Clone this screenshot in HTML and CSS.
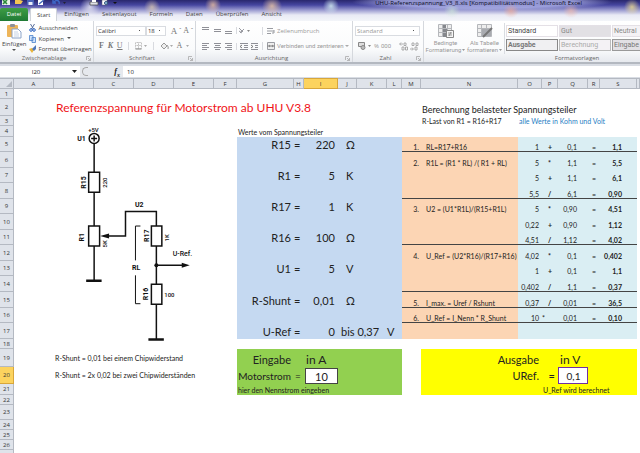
FILE: index.html
```html
<!DOCTYPE html>
<html lang="de">
<head>
<meta charset="utf-8">
<title>UHU-Referenzspannung_V3_8.xls</title>
<link rel="stylesheet" href="styles.css">
</head>
<body>
<header class="titlebar">
  <svg class="quick" width="122" height="7" viewBox="0 0 122 7" aria-hidden="true">
    <rect x="2" y="0" width="8" height="5" fill="#e8f3e6"/><path d="M3 0l4 4M7 0L3 4" stroke="#2c8a3a" stroke-width="1.6"/>
    <path d="M15 0h5l3 1-2 3h-6z" fill="#f3c552"/><path d="M27 0h7v5h-7z" fill="#4a63b8"/><path d="M28.500 2h4v3h-4z" fill="#e9edf8"/>
    <path d="M38 0h5v5h-5z" fill="#fff"/><path d="M39 4l5-4" stroke="#4468b8" stroke-width="1.500"/>
    <path d="M54 2c3-3 6-1 5 2M53 0v3h3" fill="none" stroke="#3e68c8" stroke-width="1.400"/>
    <path d="M63 2h3l-1.500 2z" fill="#223"/>
    <path d="M90 2h8v3h-8z" fill="#e0e2e8" stroke="#444" stroke-width=".7"/><path d="M92 0h4v2h-4z" fill="#fff"/>
    <path d="M102 0h5v5h-5z" fill="#fff" stroke="#667" stroke-width=".5"/><circle cx="106" cy="3" r="1.500" fill="#9ac3e8" stroke="#357"/>
    <path d="M113 2h4l-2 2z" fill="#111"/>
  </svg>
  <h1 class="title">UHU-Referenzspannung_V3_8.xls [Kompatibilitätsmodus] - Microsoft Excel</h1>
</header>
<nav class="tabs">
  <button class="tab file">Datei</button>
  <button class="tab active">Start</button>
  <button class="tab">Einfügen</button>
  <button class="tab">Seitenlayout</button>
  <button class="tab">Formeln</button>
  <button class="tab">Daten</button>
  <button class="tab">Überprüfen</button>
  <button class="tab">Ansicht</button>
</nav>
<section class="ribbon">
  <div class="group clipboard">
    <div class="tools">
      <button class="paste">
        <svg width="16" height="16" viewBox="0 0 16 16"><rect x="1" y="2" width="11" height="12" rx="1" fill="#edb459"/><rect x="4" y="1" width="5" height="3" rx="1" fill="#8d8f99"/><path d="M6 6h6l3 3v6H6z" fill="#fff" stroke="#8ba3c8"/><path d="M8 9h4M8 11h5M8 13h5" stroke="#b8c8e0" stroke-width=".8"/></svg>
        <span>Einfügen</span>
        <svg width="4" height="3" viewBox="0 0 4 3"><path d="M0 0h4L2 2z" fill="#555"/></svg>
      </button>
      <div class="stack">
        <button><svg width="7" height="8" viewBox="0 0 7 8"><path d="M1.500 0l3 5M5.500 0l-3 5" stroke="#5a6f9c"/><circle cx="2" cy="6" r="1.300" fill="none" stroke="#2c62c0"/><circle cx="5" cy="6" r="1.300" fill="none" stroke="#2c62c0"/></svg>Ausschneiden</button>
        <button><svg width="7" height="8" viewBox="0 0 7 8"><path d="M.5.500h3.500v5h-3.500zM3 2.500h3.500v5H3z" fill="#cfe2fa" stroke="#4c83cc" stroke-width=".8"/></svg>Kopieren<svg width="4" height="3" viewBox="0 0 4 3"><path d="M0 0h4L2 2z" fill="#555"/></svg></button>
        <button><svg width="7" height="8" viewBox="0 0 7 8"><path d="M0 4l3-1 2 2-2 3z" fill="#e9b43c"/><path d="M3 4l4-4v4l-2 2z" fill="#4d76b8"/></svg>Format übertragen</button>
      </div>
    </div>
    <p class="name"><span>Zwischenablage</span><svg width="5" height="5" viewBox="0 0 5 5"><path d="M.5 4V.500H4M2 2l2.500 2.500M4.500 2v2.500H2" fill="none" stroke="#aaa" stroke-width=".8"/></svg></p>
  </div>
  <div class="group font">
    <div class="tools col">
      <div class="line">
        <select class="face" aria-label="Schriftart"><option>Calibri</option></select><select class="size" aria-label="Schriftgrad"><option>18</option></select>
        <button class="serif big">A<sup>ˆ</sup></button><button class="serif">A<sup>ˇ</sup></button>
      </div>
      <div class="line serif gray spread">
        <button><b>F</b></button><button><b><i>K</i></b></button><button><u>U</u></button><i class="bar"></i>
        <svg width="12" height="8" viewBox="0 0 12 8"><path d="M.5.500h6v6h-6zM3.500.500v6M.5 3.500h6" fill="none" stroke="#bbb" stroke-dasharray="1 .6"/><path d="M.5 7h6" stroke="#888"/><path d="M9 3h3l-1.500 2z" fill="#aaa"/></svg><i class="bar"></i>
        <svg width="13" height="8" viewBox="0 0 13 8"><path d="M1 4l3-3 3 3-3 3z" fill="#eee" stroke="#999"/><path d="M7 3q2 2 1 4" stroke="#999" fill="none"/><path d="M10 3h3l-1.500 2z" fill="#aaa"/></svg>
        <button>A</button><svg width="4" height="3" viewBox="0 0 4 3"><path d="M0 0h3L1.500 2z" fill="#aaa"/></svg>
      </div>
    </div>
    <p class="name"><span>Schriftart</span><svg width="5" height="5" viewBox="0 0 5 5"><path d="M.5 4V.500H4M2 2l2.500 2.500M4.500 2v2.500H2" fill="none" stroke="#aaa" stroke-width=".8"/></svg></p>
  </div>
  <div class="group align">
    <div class="tools col">
      <div class="line">
        <svg width="46" height="9" viewBox="0 0 46 9" fill="none" stroke="#8f9097"><path d="M4 1.500h7M4 3.500h7"/><path d="M16 3.500h7M16 5.500h7"/><path d="M27 5.500h7M27 7.500h7"/><path d="M38.500 1v7" stroke="#d8dadf"/><path d="M42 7l4-4M41 2l4 4M41 5l3 2" stroke-width=".9"/></svg>
        <svg width="12" height="5" viewBox="0 0 12 5"><path d="M1 2h3l-1.500 2z" fill="#888"/></svg><i class="bar"></i>
        <button><svg width="8" height="8" viewBox="0 0 8 8" fill="none" stroke="#9a9ca2"><path d="M0 1.500h6M0 4h7M0 6.500h4"/><path d="M5 6h2V3"/></svg>Zeilenumbruch</button>
      </div>
      <div class="line">
        <svg width="60" height="9" viewBox="0 0 60 9" fill="none" stroke="#8f9097"><path d="M4 1.500h7M4 3.500h5M4 5.500h7M4 7.500h5M16 1.500h7M17 3.500h5M16 5.500h7M17 7.500h5M27 1.500h7M29 3.500h5M27 5.500h7M29 7.500h5"/><path d="M38.500 1v7" stroke="#d8dadf"/><path d="M42 1.500h8M46 3.500h4M46 5.500h4M42 7.500h8M53 1.500h7M57 3.500h3M57 5.500h3M53 7.500h7"/><path d="M44 3l-2 1.500L44 6M53 3l2 1.500L53 6" stroke="#777"/></svg><i class="bar"></i>
        <button class="tight"><svg width="8" height="8" viewBox="0 0 8 8"><path d="M.5.500h7v7h-7z" fill="#eee" stroke="#9a9ca2"/><path d="M0 4h8M3 3L1.500 4 3 5zM5 3l1.500 1L5 5z" fill="#777" stroke="#888" stroke-width=".7"/></svg>Verbinden und zentrieren<svg width="4" height="3" viewBox="0 0 4 3"><path d="M0 0h4L2 2z" fill="#aaa"/></svg></button>
      </div>
    </div>
    <p class="name"><span>Ausrichtung</span><svg width="5" height="5" viewBox="0 0 5 5"><path d="M.5 4V.500H4M2 2l2.500 2.500M4.500 2v2.500H2" fill="none" stroke="#aaa" stroke-width=".8"/></svg></p>
  </div>
  <div class="group number">
    <div class="tools col">
      <div class="line"><select class="format" aria-label="Zahlenformat"><option>Standard</option></select></div>
      <div class="line spread gray">
        <svg width="14" height="8" viewBox="0 0 14 8"><path d="M.5.500h6v4h-6z" fill="#ddd" stroke="#888"/><circle cx="5" cy="5.500" r="2" fill="#bbb" stroke="#888"/><path d="M10 3h3l-1.500 2z" fill="#888"/></svg>
        <button>%</button><button class="tight">000</button><i class="bar"></i>
        <svg width="20" height="9" viewBox="0 0 20 9" fill="none" stroke="#999" stroke-width=".8"><path d="M1 2h3M2 .5L.5 2 2 3.500M5 1h2v2.500h-2zM3 5h2v3h-2zM6.500 5h2v3h-2z"/><path d="M11 7h3M13 5.500L14.500 7 13 8.500M13 1h2v2.500h-2zM17 1h2v2.500h-2zM16 5h2v3h-2z"/></svg>
      </div>
    </div>
    <p class="name"><span>Zahl</span><svg width="5" height="5" viewBox="0 0 5 5"><path d="M.5 4V.500H4M2 2l2.500 2.500M4.500 2v2.500H2" fill="none" stroke="#aaa" stroke-width=".8"/></svg></p>
  </div>
  <div class="group styles">
    <div class="tools">
      <button class="large"><svg width="16" height="14" viewBox="0 0 16 14"><path d="M.5.500h13v12h-13zM0 4.500h13M0 8.500h13M4.500 0v12M9.500 0v12" fill="#eee" stroke="#b5b7bb"/><path d="M5 1h3v3H5zM5 5h4v3H5zM5 9h3v4H5z" fill="#85878c"/><path d="M8.500 6.500h7v7h-7z" fill="#f5f5f5" stroke="#888"/><path d="M10 9h4M10 11h4M13 8l-2 4" stroke="#777" stroke-width=".7"/></svg><span>Bedingte</span><span class="drop">Formatierung<svg width="3" height="2" viewBox="0 0 3 2"><path d="M0 0h3L1.500 2z" fill="#999"/></svg></span></button>
      <button class="large"><svg width="16" height="14" viewBox="0 0 16 14"><path d="M.5.500h14v12h-14zM0 4.500h14M0 8.500h14M4.500 0v12M9.500 0v12" fill="#eee" stroke="#b5b7bb"/><path d="M5 5h9v7H5z" fill="#a9abb0"/><path d="M6 13l3-3 6-6" stroke="#777" stroke-width="2"/></svg><span>Als Tabelle</span><span class="drop">formatieren<svg width="3" height="2" viewBox="0 0 3 2"><path d="M0 0h3L1.500 2z" fill="#999"/></svg></span></button>
      <div class="gallery">
        <button class="plain">Standard</button><button class="shade">Gut</button><button class="faint">Neutral</button>
        <button class="framed">Ausgabe</button><button class="pale">Berechnung</button><button class="shade lined">Eingabe</button>
      </div>
    </div>
    <p class="name"><span>Formatvorlagen</span></p>
  </div>
</section>
<section class="formula">
  <div class="namebox"><input aria-label="Namenfeld" value="I20"><svg width="5" height="4" viewBox="0 0 5 4"><path d="M0 0h5L2.500 3z" fill="#222"/></svg></div>
  <div class="fx"><span class="knob"></span><button>f<sub>x</sub></button></div>
  <input class="entry" aria-label="Bearbeitungsleiste" value="10">
</section>
<table class="sheet">
  <colgroup><col class="w14"><col class="w40"><col class="w40"><col class="w40"><col class="w40"><col class="w40"><col class="w23"><col class="w57"><col class="w10"><col class="w34"><col class="w19"><col class="w30"><col class="w15"><col class="w19"><col class="w97"><col class="w24"><col class="w16"><col class="w30"><col class="w12"><col class="w37"><col></colgroup>
  <thead>
    <tr><th class="corner"><svg width="6" height="6" viewBox="0 0 6 6"><path d="M6 0v6H0z" fill="#b4b9c2"/></svg></th><th>A</th><th>B</th><th>C</th><th>D</th><th>E</th><th>F</th><th>G</th><th>H</th><th class="sel">I</th><th>J</th><th>K</th><th>L</th><th>M</th><th>N</th><th>O</th><th>P</th><th>Q</th><th>R</th><th>S</th><th></th></tr>
  </thead>
  <tbody>
    <tr class="h10"><th>1</th><td colspan="20"></td></tr>
    <tr class="h17"><th>2</th><td></td><td colspan="12" class="heading">Referenzspannung für Motorstrom ab UHU V3.8</td><td colspan="7" class="subheading">Berechnung belasteter Spannungsteiler</td></tr>
    <tr class="h10"><th>3</th>
      <td colspan="6" rowspan="16" class="drawing">
        <svg class="circuit" viewBox="14 115 223 233" role="img" aria-label="Schaltplan Spannungsteiler">
          <g fill="none" stroke="#111" stroke-width="1.500">
            <circle cx="94" cy="137.500" r="5"/><path d="M91 137.500h6M94 134.500v6M94 143v28.500M94 191.500v34M94 245.500v35"/>
            <path d="M88.500 171.500h11v20h-11zM88.500 225.500h11v20h-11zM151.500 225.500h10.500v20h-10.500zM151.500 284h10.500v20h-10.500z"/>
            <path d="M105 235.500h20.500V211H156.500v14.500M156.500 245.500V284M156.500 304v35M156.500 264.800H184"/>
            <path d="M140.500 225.500h-5V260M135.500 275v28.500h5" stroke-width="1"/>
            <path d="M86 280.500h15.500M148.500 339.500H164" stroke-width="2.600"/>
          </g>
          <path d="M100 235.500l9-2.500v5zM190 264.800l-8-2.500v5z" fill="#111"/><circle cx="156.500" cy="264.800" r="2" fill="#111"/>
          <g class="part">
            <text x="77" y="140.500">U1</text><text x="135" y="206">U2</text><text x="132" y="270">RL</text><text class="net" x="173" y="255.500">U-Ref.</text>
            <text transform="translate(86 188)rotate(-90)">R15</text><text transform="translate(84 241)rotate(-90)">R1</text>
            <text transform="translate(149 241.500)rotate(-90)">R17</text><text transform="translate(148 300)rotate(-90)">R16</text>
          </g>
          <g class="value">
            <text x="88" y="131">+5V</text><text x="164.500" y="296.500">100</text>
            <text transform="translate(107 187)rotate(-90)">220</text><text transform="translate(107 247)rotate(-90)">5K</text><text transform="translate(169 241)rotate(-90)">1K</text>
          </g>
        </svg>
      </td>
      <td colspan="7"></td><td class="small start">R-Last von R1 = R16+R17</td><td colspan="6" class="small blue start">alle Werte in Kohm und Volt</td></tr>
    <tr class="h11"><th>4</th><td colspan="14" class="small start">Werte vom Spannungsteiler</td></tr>
    <tr class="h15 rule"><th>5</th><td class="v r">R15</td><td class="v">=</td><td class="v r">220</td><td class="v u">Ω</td><td class="v"></td><td class="v"></td><td class="m">1.</td><td class="n">RL=R17+R16</td><td class="c r">1</td><td class="c op">+</td><td class="c q">0,1</td><td class="c eq">=</td><td class="c s">1,1</td><td></td></tr>
    <tr class="h16"><th>6</th><td class="v" colspan="6"></td><td class="m">2.</td><td class="n">R1L = (R1 * RL) /( R1 + RL)</td><td class="c r">5</td><td class="c op">*</td><td class="c q">1,1</td><td class="c eq">=</td><td class="c s">5,5</td><td></td></tr>
    <tr class="h15"><th>7</th><td class="v r">R1</td><td class="v">=</td><td class="v r">5</td><td class="v u">K</td><td class="v"></td><td class="v"></td><td class="m"></td><td class="n"></td><td class="c r">5</td><td class="c op">+</td><td class="c q">1,1</td><td class="c eq">=</td><td class="c s">6,1</td><td></td></tr>
    <tr class="h16 rule"><th>8</th><td class="v" colspan="6"></td><td class="m"></td><td class="n"></td><td class="c r">5,5</td><td class="c op">/</td><td class="c q">6,1</td><td class="c eq">=</td><td class="c s">0,90</td><td></td></tr>
    <tr class="h15"><th>9</th><td class="v r">R17</td><td class="v">=</td><td class="v r">1</td><td class="v u">K</td><td class="v"></td><td class="v"></td><td class="m">3.</td><td class="n">U2 = (U1*R1L)/(R15+R1L)</td><td class="c r">5</td><td class="c op">*</td><td class="c q">0,90</td><td class="c eq">=</td><td class="c s">4,51</td><td></td></tr>
    <tr class="h16"><th>10</th><td class="v" colspan="6"></td><td class="m"></td><td class="n"></td><td class="c r">0,22</td><td class="c op">+</td><td class="c q">0,90</td><td class="c eq">=</td><td class="c s">1,12</td><td></td></tr>
    <tr class="h15 rule"><th>11</th><td class="v r">R16</td><td class="v">=</td><td class="v r">100</td><td class="v u">Ω</td><td class="v"></td><td class="v"></td><td class="m"></td><td class="n"></td><td class="c r">4,51</td><td class="c op">/</td><td class="c q">1,12</td><td class="c eq">=</td><td class="c s">4,02</td><td></td></tr>
    <tr class="h16"><th>12</th><td class="v" colspan="6"></td><td class="m">4.</td><td class="n">U_Ref = (U2*R16)/(R17+R16)</td><td class="c r">4,02</td><td class="c op">*</td><td class="c q">0,1</td><td class="c eq">=</td><td class="c s">0,402</td><td></td></tr>
    <tr class="h15"><th>13</th><td class="v r">U1</td><td class="v">=</td><td class="v r">5</td><td class="v u">V</td><td class="v"></td><td class="v"></td><td class="m"></td><td class="n"></td><td class="c r">1</td><td class="c op">+</td><td class="c q">0,1</td><td class="c eq">=</td><td class="c s">1,1</td><td></td></tr>
    <tr class="h16 rule"><th>14</th><td class="v" colspan="6"></td><td class="m"></td><td class="n"></td><td class="c r">0,402</td><td class="c op">/</td><td class="c q">1,1</td><td class="c eq">=</td><td class="c s">0,37</td><td></td></tr>
    <tr class="h16 rule"><th>15</th><td class="v r">R-Shunt</td><td class="v">=</td><td class="v r">0,01</td><td class="v u">Ω</td><td class="v"></td><td class="v"></td><td class="m">5.</td><td class="n">I_max. = Uref / Rshunt</td><td class="c r">0,37</td><td class="c op">/</td><td class="c q">0,01</td><td class="c eq">=</td><td class="c s">36,5</td><td></td></tr>
    <tr class="h15 rule"><th>16</th><td class="v" colspan="6"></td><td class="m">6.</td><td class="n">U_Ref = I_Nenn * R_Shunt</td><td class="c r">10</td><td class="c">*</td><td class="c q">0,01</td><td class="c eq">=</td><td class="c s">0,10</td><td></td></tr>
    <tr class="h16"><th>17</th><td class="v r">U-Ref</td><td class="v">=</td><td class="v r">0</td><td class="v unitspan" colspan="2">bis 0,37</td><td class="v">V</td><td class="m"></td><td class="n"></td><td class="c" colspan="5"></td><td></td></tr>
    <tr class="h10"><th>18</th><td colspan="14"></td></tr>
    <tr class="h18"><th>19</th><td></td><td colspan="5" class="small note">R-Shunt = 0,01 bei einem Chipwiderstand</td><td class="g r">Eingabe</td><td class="g"></td><td class="g unit" colspan="4">in A</td><td></td><td class="y r" colspan="2">Ausgabe</td><td class="y"></td><td class="y unit" colspan="3">in V</td><td></td></tr>
    <tr class="h17"><th class="sel">20</th><td></td><td colspan="5" class="small note">R-Shunt = 2x 0,02 bei zwei Chipwiderständen</td><td class="g r mid"><label for="strom">Motorstrom</label></td><td class="g mid">=</td><td class="g"><input id="strom" class="amp" value="10"></td><td class="g" colspan="3"></td><td></td><td class="y r mid result" colspan="2">URef.</td><td class="y mid r result">=</td><td class="y out">0,1</td><td class="y" colspan="2"></td><td></td></tr>
    <tr class="h11"><th>21</th><td colspan="6"></td><td class="g small" colspan="6">hier den Nennstrom eingeben</td><td></td><td class="y" colspan="2"></td><td class="y small" colspan="4">U_Ref wird berechnet</td><td></td></tr>
    <tr class="h10"><th>22</th><td colspan="20"></td></tr>
    <tr class="h15"><th>23</th><td colspan="20"></td></tr>
    <tr class="h10"><th>24</th><td colspan="20"></td></tr>
    <tr class="h10"><th>25</th><td colspan="20"></td></tr>
    <tr class="h10"><th>26</th><td colspan="20"></td></tr>
    <tr class="h10"><th></th><td colspan="20"></td></tr>
  </tbody>
</table>
</body>
</html>
```
FILE: styles.css
```css
* { box-sizing: border-box; }
html, body { margin: 0; height: 100%; overflow: hidden; }
body {
  font: 6px/8px "Open Sans", "Noto Sans", sans-serif;
  color: #444;
  background:
    radial-gradient(ellipse 10px 10px at 90px 7px, #ffffffb0, #fff0),
    radial-gradient(ellipse 8px 8px at 152px 7px, #f6e0b0a0, #fff0),
    radial-gradient(ellipse 8px 8px at 213px 5px, #f6c8a0c0, #fff0),
    radial-gradient(ellipse 10px 9px at 272px 6px, #f7d0a4c0, #fff0),
    radial-gradient(ellipse 8px 8px at 331px 6px, #d9f3f3d0, #fff0),
    radial-gradient(ellipse 8px 7px at 452px 11px, #d0ead8a0, #fff0),
    radial-gradient(ellipse 8px 7px at 511px 11px, #f3a890a0, #fff0),
    radial-gradient(ellipse 8px 7px at 571px 11px, #f3b8a8a0, #fff0),
    radial-gradient(ellipse 8px 8px at 632px 7px, #f5e28cc0, #fff0),
    radial-gradient(ellipse 130px 9px at 482px 2px, #a8ace4d0 70%, #fff0),
    linear-gradient(#29276d, #4646a0 5px, #9a9ad0 10px, #e9eaf5 15px, #f3f5f9 21px, #fff 22px);
}
button, input, select { font: inherit; color: inherit; border: 0; padding: 0; margin: 0; background: none; border-radius: 0; }
button { white-space: nowrap; text-align: inherit; }
svg { flex: none; display: block; }
p, h1 { margin: 0; }

.titlebar { display: flex; justify-content: space-between; height: 8px; }
.title { margin-right: 58px; font-size: 6px; font-weight: 400; line-height: 6px; color: #0a0a22; white-space: nowrap; }

.tabs { display: flex; gap: 1px; height: 13px; }
.tab { padding: 0 6px; line-height: 13px; color: #444; }
.tab.file { width: 28px; margin-right: 1px; padding: 0; text-align: center; color: #fff; background: linear-gradient(#3f9d45, #1f7a35); border-radius: 2px 2px 0 0; }
.tab.active { background: #fff; border: 1px solid #cfd3da; border-bottom: 0; border-radius: 2px 2px 0 0; line-height: 12px; }

.ribbon { display: flex; height: 43px; overflow: hidden; background: linear-gradient(#fff, #fafbfc 28px, #e6e9ee); border-bottom: 2px solid #b3b8c0; }
.group { display: flex; flex-direction: column; flex: none; border-right: 1px solid #d5d8dd; padding: 2px 2px 0; }
.clipboard { width: 94px; }
.font { width: 102px; }
.align { width: 157px; }
.number { width: 71px; }
.styles { flex: 1 0 306px; border: 0; }
.tools { display: flex; height: 32px; }
.col { flex-direction: column; justify-content: space-around; }
.name { display: flex; align-items: center; text-align: center; color: #666; line-height: 8px; }
.name span { flex: 1; }
.line { display: flex; align-items: center; gap: 2px; height: 12px; color: #999; }
.line button, .stack button { display: flex; align-items: center; gap: 2px; }
.spread { justify-content: space-between; padding: 0 3px; }
.serif { font-family: "Liberation Serif", serif; font-size: 8px; color: #777; }
.serif.big { font-size: 9px; margin-left: 3px; }
.serif sup { font-size: 6px; line-height: 1px; }
.tight, .large { font-family: Roboto, sans-serif; }
.bar { width: 1px; height: 8px; background: #d8dadf; margin: 0 2px; }
.paste, .large { display: flex; flex-direction: column; align-items: center; text-align: center; }
.paste { width: 26px; gap: 1px; }
.stack { display: flex; flex-direction: column; justify-content: space-between; padding-left: 2px; }
.stack button { height: 10px; gap: 3px; }
select { appearance: none; height: 10px; border: 1px solid #d9dce1; color: #333; padding-left: 1px; background: linear-gradient(135deg, #555 50%, #fff0 50%) right 4px center / 2px 2px no-repeat #fff; }
.face { width: 56px; }
.size { width: 22px; margin-left: -2px; }
.format { width: 65px; color: #999; }
.large { width: 39px; color: #999; line-height: 7px; }
.large > svg { margin: 1px 0; }
.drop { display: flex; align-items: center; gap: 1px; }
.gallery { display: grid; grid-template-columns: 52px 52px 52px; grid-template-rows: 12px 12px; gap: 2px 1px; padding: 2px 0 0 1px; flex: 1; border: solid #d9dce1; border-width: 0 0 0 1px; font-size: 7px; }
.gallery button { padding-left: 1px; border: 1px solid #e4e0e6; color: #888; background: #f4f2f5; font-family: Roboto, sans-serif; }
.gallery .plain { background: #fff; color: #444; }
.gallery .shade { background: #e2e0e4; }
.gallery .lined { border-color: #999; color: #777; }
.gallery .framed { border-color: #888; background: #f0f0f2; font-weight: 700; color: #777; }
.gallery .pale { border-color: #bbb; color: #aaa; }

.formula { display: flex; height: 14px; padding: 2px 0 1px; background: #d9dde4; color: #222; font-size: 6px; }
.namebox { display: flex; align-items: center; width: 80px; background: #fff; padding-right: 3px; }
.namebox input { flex: 1; min-width: 0; text-align: center; }
.fx { display: flex; align-items: center; justify-content: space-between; width: 43px; padding: 0 3px 0 2px; background: #e6e9ee; }
.knob { width: 6px; height: 9px; border: 1px solid #aaa; border-right: 0; border-radius: 5px 0 0 5px; }
.fx button { font: italic 700 8px/10px "Liberation Serif", serif; }
.fx sub { font-size: 6px; line-height: 1px; }
.entry { flex: 1; min-width: 0; padding-left: 4px; background: #fff; }

.sheet { width: 100%; table-layout: fixed; border-collapse: separate; border-spacing: 0; background: #fff; font: 7px/9px Lato, "Open Sans", sans-serif; color: #222; }
.sheet th, .sheet td { padding: 0; white-space: nowrap; vertical-align: bottom; text-align: left; }
.sheet th { text-align: center; font: 6px/8px "Open Sans", sans-serif; color: #333; background: #dfe3ea; border: solid #b4b9c2; border-width: 0 1px 1px 0; }
.sheet thead tr { height: 11px; }
.sheet thead th { border-top-width: 1px; vertical-align: middle; }
.sheet tbody th { vertical-align: middle; }
.sheet th.sel { background: #fcd35e; border-color: #d8a63a; }
.corner svg { margin: 1px 1px 0 auto; }
.w10 { width: 10px; } .w12 { width: 12px; } .w14 { width: 14px; } .w15 { width: 15px; } .w16 { width: 16px; }
.w19 { width: 19px; } .w23 { width: 23px; } .w24 { width: 24px; } .w30 { width: 30px; } .w34 { width: 34px; }
.w37 { width: 37px; } .w40 { width: 40px; } .w57 { width: 57px; } .w97 { width: 97px; }
.h10 { height: 10px; } .h11 { height: 11px; } .h15 { height: 15px; } .h16 { height: 16px; } .h17 { height: 17px; } .h18 { height: 18px; }

.sheet .heading { font-size: 12px; line-height: 16px; color: #f01418; padding-left: 2px; }
.sheet .subheading { font-size: 9px; line-height: 12px; padding-left: 1px; }
.sheet .small { font-size: 7px; line-height: 9px; }
.sheet .start { padding-left: 1px; }
.sheet .blue { color: #1f80c4; }
.sheet .note { padding-left: 1px; vertical-align: middle; }
.sheet .drawing { vertical-align: top; }
.circuit { width: 100%; height: 232px; }
.part { font: 700 7px "Liberation Sans Narrow", Roboto, sans-serif; fill: #111; }
.part .net { font: 500 7px Roboto, sans-serif; }
.value { font: 500 6px "Liberation Sans Narrow", Roboto, sans-serif; fill: #111; }

.sheet .v { background: #c5d9f1; font-size: 11px; line-height: 13px; vertical-align: middle; }
.sheet .r { text-align: right; padding-right: 3px; }
.sheet .u { padding-left: 8px; }
.sheet .unitspan { padding-left: 3px; }
.sheet .m { background: #fcd5b4; text-align: right; padding-right: 2px; }
.sheet .n { background: #fcd5b4; padding-left: 5px; }
.sheet .c { background: #daeef3; }
.sheet .op { padding-left: 6px; font-weight: 700; }
.sheet .q { text-align: right; padding-right: 11px; }
.sheet .eq { text-align: center; }
.sheet .s { text-align: right; padding-right: 15px; font-weight: 700; }
.rule .m, .rule .n, .rule .c { box-shadow: inset 0 -1px #444; }

.sheet .g { background: #92d050; }
.sheet .y { background: #ff0; }
.sheet .g, .sheet .y { font-size: 11px; line-height: 14px; padding-left: 1px; }
.sheet .mid { vertical-align: middle; font-size: 10px; }
.sheet .result { font-size: 11px; }
.sheet .unit { font-size: 12px; padding-left: 2px; }
.sheet .g.small, .sheet .y.small { font-size: 7px; line-height: 9px; }
.amp { display: block; width: 100%; height: 16px; border: 1px solid #444; background: #fff; text-align: center; font-size: 11px; }
.sheet .out { background: #fff; border: 1px solid #7030a0; text-align: center; font-size: 10px; }
```
